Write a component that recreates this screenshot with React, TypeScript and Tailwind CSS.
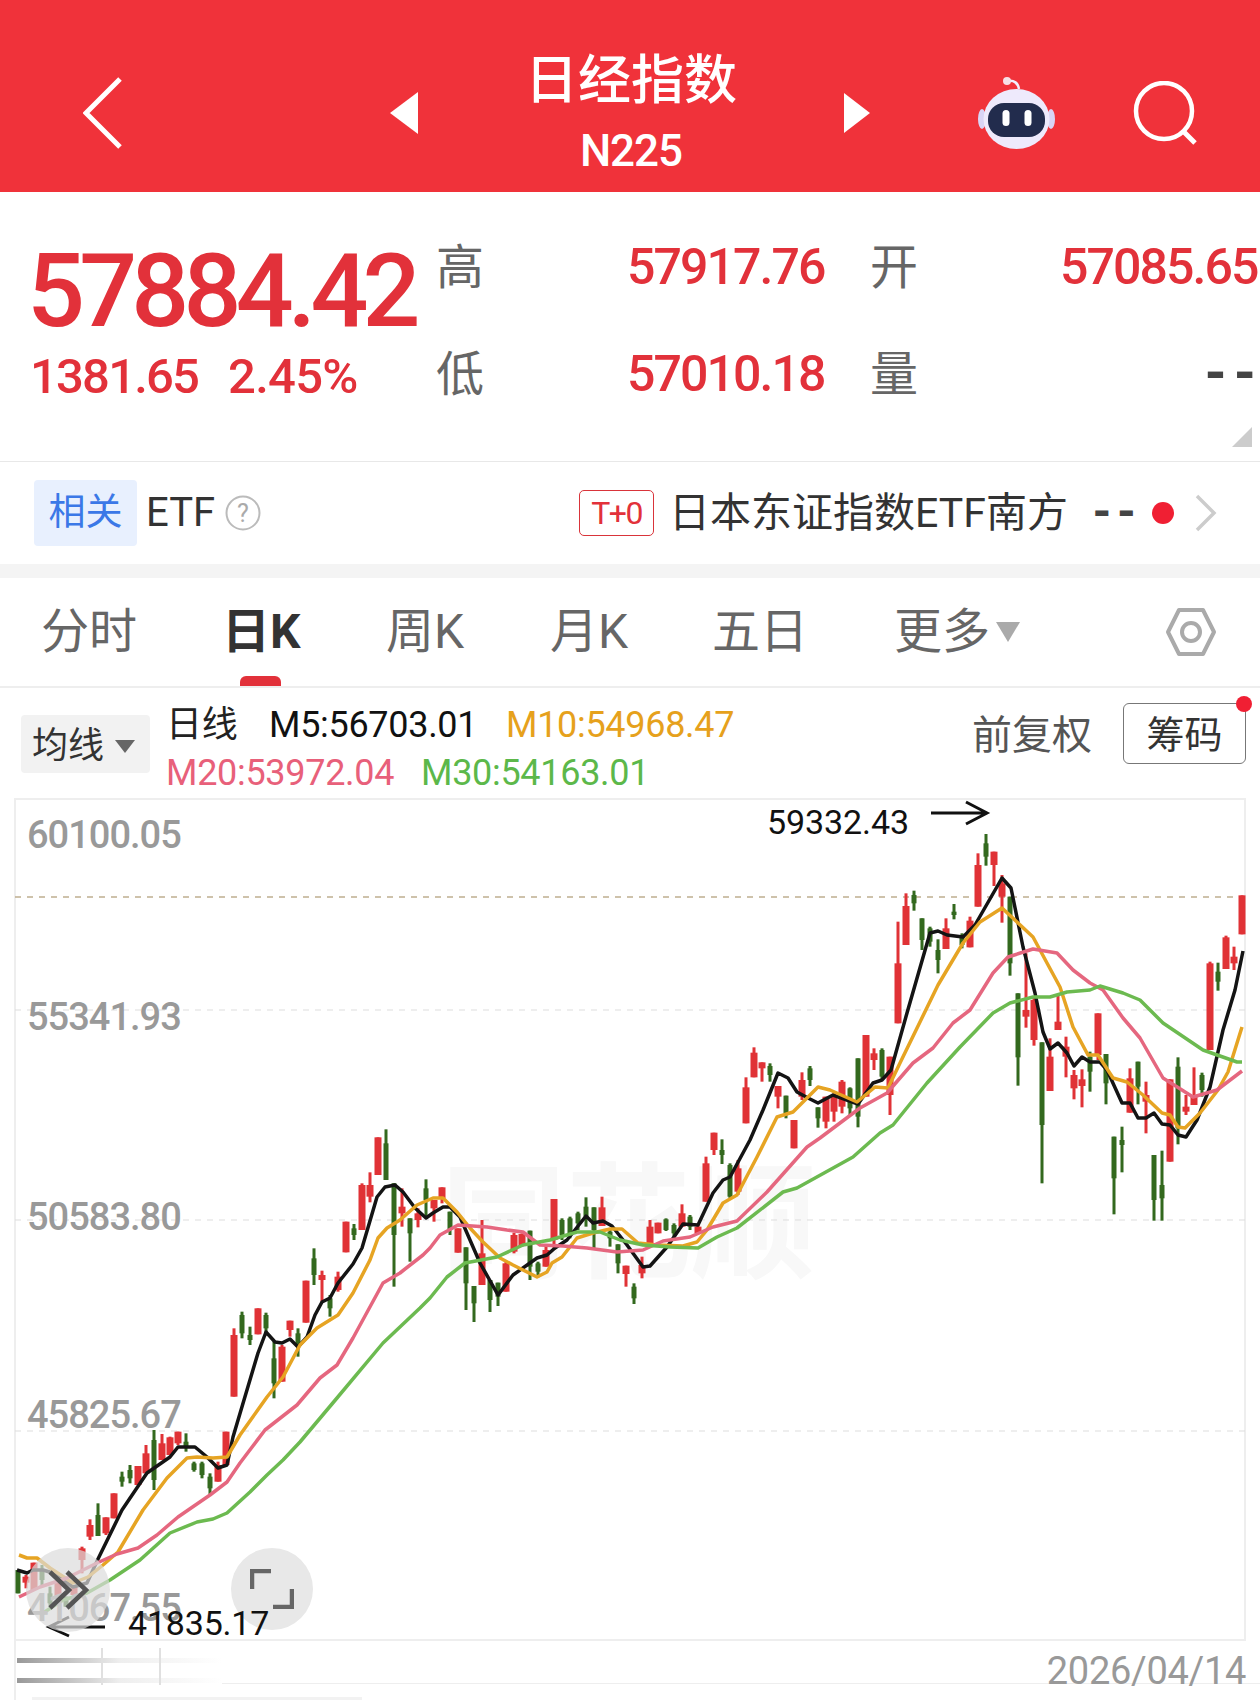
import React from "react";

type Candle = [number, number, number, number, "r" | "g"];

// y values are read off 3x crops, so y = base + v / 3, x steps by 8
const groups: { x: number; base: number; rows: Candle[] }[] = [
  {
    x: 18,
    base: 1400,
    rows: [
      [510, 580, 510, 580, "g"], [525, 565, 530, 548, "r"], [488, 570, 488, 570, "r"], [495, 560, 510, 540, "g"],
      [560, 620, 580, 610, "g"], [545, 600, 545, 590, "r"], [590, 620, 590, 620, "g"], [555, 590, 555, 585, "r"],
      [440, 520, 445, 480, "r"], [358, 420, 375, 410, "r"], [310, 408, 345, 408, "g"], [352, 405, 352, 400, "r"],
      [280, 355, 280, 355, "r"], [215, 260, 230, 245, "g"], [195, 250, 210, 235, "g"], [198, 255, 198, 255, "r"],
      [135, 220, 160, 220, "r"], [90, 270, 120, 240, "g"], [102, 180, 130, 180, "r"], [110, 165, 112, 165, "r"],
      [95, 135, 95, 130, "r"], [100, 155, 125, 140, "g"], [185, 215, 190, 210, "g"], [185, 235, 190, 225, "g"],
      [220, 285, 230, 265, "g"], [185, 245, 195, 245, "r"], [95, 195, 95, 195, "r"],
    ],
  },
  {
    x: 234,
    base: 1000,
    rows: [
      [985, 1190, 1005, 1190, "r"], [935, 1015, 945, 1000, "g"], [980, 1035, 1005, 1020, "g"], [925, 1003, 925, 1003, "r"],
      [938, 1000, 945, 985, "g"], [1025, 1195, 1075, 1150, "g"], [1035, 1145, 1040, 1145, "r"], [962, 1010, 962, 990, "r"],
      [985, 1070, 1000, 1040, "g"], [842, 968, 842, 968, "r"], [745, 855, 775, 825, "g"], [812, 905, 825, 840, "r"],
      [885, 950, 895, 925, "g"], [815, 875, 830, 870, "r"], [665, 757, 665, 757, "r"], [672, 720, 685, 705, "g"],
      [550, 690, 555, 690, "r"], [517, 607, 555, 590, "r"], [412, 525, 412, 525, "r"], [388, 540, 430, 540, "g"],
      [550, 860, 550, 705, "g"], [565, 680, 620, 640, "r"], [655, 785, 655, 700, "g"], [625, 682, 640, 660, "r"],
      [538, 650, 565, 600, "g"],
    ],
  },
  {
    x: 434,
    base: 1000,
    rows: [
      [600, 665, 600, 625, "r"], [562, 610, 562, 595, "r"], [635, 705, 635, 690, "g"], [685, 758, 685, 758, "r"],
      [742, 930, 742, 850, "g"], [858, 966, 858, 910, "g"], [660, 855, 760, 855, "r"], [840, 936, 840, 900, "g"],
      [848, 918, 848, 890, "g"], [785, 875, 790, 875, "r"], [698, 760, 705, 755, "r"], [700, 740, 702, 738, "r"],
      [692, 840, 692, 800, "g"], [785, 832, 790, 815, "g"], [735, 800, 750, 800, "r"], [597, 750, 597, 720, "r"],
      [655, 720, 660, 705, "g"], [650, 715, 655, 700, "g"], [635, 690, 640, 670, "g"], [592, 680, 620, 650, "g"],
      [622, 745, 622, 690, "g"], [590, 678, 622, 678, "r"], [690, 740, 695, 715, "g"], [733, 820, 733, 790, "g"],
      [797, 860, 797, 822, "r"], [850, 912, 860, 895, "g"], [770, 835, 795, 820, "r"], [660, 735, 680, 735, "r"],
      [668, 700, 668, 700, "r"], [655, 693, 658, 690, "g"], [670, 710, 675, 700, "g"], [613, 680, 640, 680, "r"],
      [645, 690, 650, 680, "g"], [670, 700, 680, 700, "r"], [470, 605, 490, 605, "r"], [398, 465, 398, 450, "r"],
      [418, 492, 450, 465, "g"], [490, 595, 495, 590, "g"], [480, 585, 505, 575, "r"], [232, 370, 262, 370, "r"],
      [142, 232, 158, 232, "r"], [187, 245, 187, 205, "r"], [190, 245, 198, 225, "g"], [258, 325, 258, 290, "r"],
      [287, 355, 287, 340, "g"], [360, 445, 360, 445, "r"], [217, 300, 240, 290, "r"], [198, 258, 205, 240, "g"],
      [322, 383, 322, 355, "g"], [290, 385, 290, 365, "r"], [280, 365, 290, 335, "r"], [240, 340, 245, 320, "r"],
      [262, 345, 265, 325, "g"], [175, 382, 175, 350, "g"],
    ],
  },
  {
    x: 866,
    base: 800,
    rows: [
      [705, 890, 705, 890, "r"], [745, 810, 760, 780, "r"], [745, 840, 750, 830, "g"], [770, 945, 770, 885, "r"],
      [365, 670, 490, 670, "r"], [280, 435, 318, 435, "r"], [272, 332, 285, 310, "g"], [355, 450, 355, 420, "g"],
      [380, 440, 385, 425, "g"], [418, 520, 450, 480, "g"], [355, 447, 385, 447, "r"], [312, 358, 335, 345, "g"],
      [400, 445, 405, 435, "g"], [350, 442, 362, 442, "r"], [160, 320, 195, 320, "r"], [102, 197, 130, 170, "g"],
      [155, 258, 155, 195, "r"], [225, 368, 250, 290, "r"], [290, 527, 290, 490, "g"], [580, 857, 580, 772, "g"],
      [460, 683, 630, 650, "r"], [590, 737, 600, 720, "r"], [727, 1150, 727, 975, "g"], [715, 873, 770, 873, "r"],
      [585, 690, 665, 690, "r"], [710, 832, 740, 770, "r"], [810, 898, 825, 865, "r"], [808, 922, 838, 858, "r"],
      [755, 875, 770, 815, "g"], [640, 780, 640, 765, "r"], [762, 913, 762, 850, "g"], [1010, 1243, 1010, 1135, "g"],
      [980, 1117, 1020, 1035, "g"], [805, 938, 835, 938, "r"], [785, 913, 785, 860, "g"], [845, 1000, 885, 905, "r"],
      [1065, 1262, 1065, 1200, "g"], [1052, 1262, 1155, 1195, "g"], [838, 1085, 838, 1085, "r"], [772, 1033, 800, 985, "g"],
      [885, 945, 920, 935, "r"], [802, 915, 885, 915, "r"], [818, 890, 825, 870, "g"], [485, 750, 490, 750, "r"],
      [488, 572, 515, 545, "g"], [407, 507, 412, 507, "r"], [440, 510, 470, 490, "r"], [286, 403, 286, 403, "r"],
    ],
  },
];

const m5 = "17,1570 27,1573 33,1570 43,1570 53,1573 73,1587 87,1583 98,1559 122,1510 147,1473 170,1457 178,1447 195,1447 207,1457 218,1468 227,1465 233,1437 258,1353 266,1332 275,1342 282,1343 290,1339 298,1347 307,1337 315,1315 322,1302 330,1298 338,1283 353,1264 362,1248 377,1197 385,1187 395,1185 403,1192 415,1208 426,1218 433,1213 443,1207 450,1207 460,1217 470,1240 480,1263 498,1295 513,1275 537,1258 547,1255 555,1248 567,1240 586,1216 593,1223 603,1221 612,1226 627,1245 643,1267 650,1266 667,1247 683,1224 698,1225 713,1193 723,1180 730,1177 750,1140 763,1110 778,1073 788,1078 797,1092 808,1098 818,1103 833,1095 858,1104 873,1083 882,1080 891,1070 907,1013 930,933 938,931 947,935 963,937 975,925 1002,878 1011,888 1023,947 1035,993 1043,1032 1050,1049 1058,1043 1067,1053 1074,1066 1082,1057 1090,1062 1100,1062 1107,1070 1122,1103 1130,1103 1138,1118 1146,1118 1154,1113 1162,1124 1170,1125 1178,1135 1186,1137 1197,1120 1210,1087 1223,1030 1235,990 1243,951";
const m10 = "19,1555 27,1558 37,1558 50,1568 73,1583 88,1577 103,1565 118,1552 143,1510 167,1478 187,1458 197,1457 213,1458 227,1457 240,1435 267,1397 283,1377 300,1345 317,1328 338,1315 353,1293 370,1260 378,1238 387,1228 400,1220 417,1205 433,1198 443,1198 457,1212 470,1228 483,1242 500,1258 513,1265 537,1277 547,1272 552,1263 562,1257 577,1238 593,1233 610,1229 622,1229 638,1243 657,1245 683,1246 697,1242 707,1230 723,1203 737,1195 757,1157 777,1117 793,1112 818,1087 830,1090 857,1102 875,1087 888,1088 900,1063 938,985 963,943 980,922 1002,908 1017,922 1033,937 1047,963 1060,987 1073,1027 1088,1055 1098,1055 1113,1078 1127,1082 1143,1095 1162,1113 1170,1115 1178,1127 1185,1128 1200,1113 1218,1090 1228,1072 1242,1027";
const m20 = "19,1597 40,1587 67,1578 97,1563 117,1554 138,1548 157,1535 178,1517 210,1495 227,1482 240,1463 265,1430 297,1405 320,1378 337,1365 353,1338 383,1283 400,1273 423,1255 430,1248 440,1235 458,1225 487,1227 507,1230 523,1232 540,1245 563,1246 587,1248 617,1252 643,1250 663,1241 690,1237 713,1227 737,1221 767,1192 807,1147 820,1138 860,1108 887,1093 913,1063 933,1048 953,1023 970,1010 993,973 1008,957 1033,949 1057,953 1073,970 1090,983 1103,990 1123,1018 1140,1038 1163,1078 1193,1097 1217,1090 1242,1071";
const m30 = "40,1615 63,1600 87,1593 110,1580 140,1560 170,1533 197,1522 213,1519 227,1513 250,1492 267,1475 283,1460 300,1442 337,1398 383,1343 420,1308 430,1298 447,1277 465,1263 497,1257 523,1245 550,1240 577,1232 600,1232 620,1240 643,1245 670,1247 698,1248 717,1237 737,1228 783,1192 797,1188 853,1157 880,1133 893,1125 927,1083 960,1047 993,1013 1010,1003 1033,997 1050,997 1067,992 1090,990 1100,986 1123,993 1140,1000 1163,1023 1203,1050 1237,1062 1242,1062";

function KChart() {
  return (
    <svg className="absolute left-[-2px] top-[-2px]" width="1232" height="843" viewBox="14 798 1232 843">
      {[1010, 1220, 1431].map((y) => (
        <line key={y} x1="15" x2="1245" y1={y} y2={y} stroke="#ddd" strokeWidth="1" strokeDasharray="6 6" />
      ))}
      <line x1="15" x2="1245" y1="897" y2="897" stroke="#bfae90" strokeWidth="1.5" strokeDasharray="6 6" />
      {groups.map((g) =>
        g.rows.map((c, i) => {
          const x = g.x + i * 8;
          const color = c[4] === "r" ? "#e03236" : "#33691e";
          const w = c[4] === "r" ? 7 : 5;
          return (
            <g key={x}>
              <rect x={x - 1.5} y={g.base + c[0] / 3} width="3" height={(c[1] - c[0]) / 3} fill={color} />
              <rect x={x - w / 2} y={g.base + c[2] / 3} width={w} height={(c[3] - c[2]) / 3} fill={color} />
            </g>
          );
        })
      )}
      <polyline points={m5} fill="none" stroke="#141414" strokeWidth="3.5" strokeLinejoin="round" />
      <polyline points={m10} fill="none" stroke="#e6a423" strokeWidth="3.5" strokeLinejoin="round" />
      <polyline points={m20} fill="none" stroke="#e5677f" strokeWidth="3.5" strokeLinejoin="round" />
      <polyline points={m30} fill="none" stroke="#6cba50" strokeWidth="3.5" strokeLinejoin="round" />
      <path d="M931 813H986M966 802l21 11-21 11" fill="none" stroke="#111" strokeWidth="3" />
      <path d="M105 1627H50M69 1617l-20 10 20 9" fill="none" stroke="#111" strokeWidth="3" />
    </svg>
  );
}

function Robot() {
  return (
    <svg width="80" height="72" viewBox="0 0 80 72">
      <path d="M30 4c6-1 10 2 11 8" fill="none" stroke="#f3eefc" strokeWidth="2.5" />
      <circle cx="29" cy="4" r="4" fill="#f7dfe6" />
      <ellipse cx="4" cy="42" rx="4" ry="10" fill="#d9d4f5" />
      <ellipse cx="73" cy="42" rx="4" ry="10" fill="#d9d4f5" />
      <ellipse cx="38.5" cy="42" rx="33" ry="30" fill="#eeeafc" />
      <rect x="10" y="26" width="57" height="34" rx="16" fill="#222c4d" />
      <rect x="24.5" y="33" width="7" height="16" rx="3.5" fill="#fff" />
      <rect x="46.5" y="33" width="7" height="16" rx="3.5" fill="#fff" />
    </svg>
  );
}

export default function App() {
  return (
    <div className="relative h-[1700px] w-[1260px] overflow-hidden bg-white font-['Roboto','Noto_Sans_CJK_SC',sans-serif]">
      <header className="flex h-[192px] items-center bg-[#f0323a] pt-[34px] text-white">
        <svg className="ml-[83px]" width="40" height="72" viewBox="0 0 40 72">
          <path d="M37 2 3 36l34 34" fill="none" stroke="#fff" strokeWidth="5" />
        </svg>
        <svg className="ml-[267px]" width="28" height="42" viewBox="0 0 28 42">
          <path d="M28 0v42L0 21z" fill="#fff" />
        </svg>
        <div className="flex w-[426px] flex-col items-center">
          <div className="mt-[-4px] text-[53px] leading-[66px] font-medium">日经指数</div>
          <div className="mt-[14px] text-[44px] leading-[46px] font-medium tracking-[-1px]">N225</div>
        </div>
        <svg width="26" height="40" viewBox="0 0 26 40">
          <path d="M0 0v40l26-20z" fill="#fff" />
        </svg>
        <div className="ml-[108px]">
          <Robot />
        </div>
        <svg className="ml-[75px]" width="64" height="64" viewBox="0 0 64 64">
          <circle cx="31" cy="30" r="28" fill="none" stroke="#fff" strokeWidth="4.5" />
          <path d="m50 50 12 12" stroke="#fff" strokeWidth="5" />
        </svg>
      </header>

      <section className="relative flex h-[270px] border-b border-[#e8e8e8]">
        <div className="w-[436px] pl-[27px]">
          <div className="mt-[44px] text-[102px] leading-[110px] font-medium tracking-[-5.8px] text-[#e2313a]">57884.42</div>
          <div className="mt-[1px] ml-[3px] flex text-[49px] leading-[60px] font-medium text-[#e2313a]">
            <span className="w-[198px] tracking-[-1.8px]">1381.65</span>
            <span className="tracking-[-0.7px]">2.45%</span>
          </div>
        </div>
        <div className="mt-[22px] grid h-[214px] flex-1 grid-cols-[191px_243px_190px_1fr] grid-rows-2 items-center whitespace-nowrap text-[#e2313a]">
          <span className="text-[48px] text-[#666]">高</span>
          <span className="text-[50px] font-medium tracking-[-1.9px]">57917.76</span>
          <span className="text-[48px] text-[#666]">开</span>
          <span className="text-[50px] font-medium tracking-[-1.9px]">57085.65</span>
          <span className="text-[48px] text-[#666]">低</span>
          <span className="text-[50px] font-medium tracking-[-1.9px]">57010.18</span>
          <span className="text-[48px] text-[#666]">量</span>
          <span className="pr-[2px] text-right font-['Liberation_Mono',monospace] text-[54px] font-bold tracking-[-3px] text-[#444]">--</span>
        </div>
        <svg className="absolute left-[1232px] top-[235px]" width="20" height="20" viewBox="0 0 20 20">
          <path d="M20 0v20H0z" fill="#ccc" />
        </svg>
      </section>

      <section className="flex h-[102px] items-center">
        <div className="ml-[34px] flex h-[66px] w-[103px] items-center justify-center rounded-[4px] bg-[#e8f0fe] text-[37px] text-[#3b78e7]">相关</div>
        <span className="ml-[9px] text-[40px] text-[#333]">ETF</span>
        <svg className="ml-[10px]" width="36" height="36" viewBox="0 0 36 36">
          <circle cx="18" cy="18" r="16.5" fill="none" stroke="#bbb" strokeWidth="2" />
          <text x="18" y="27" textAnchor="middle" fontSize="25" fill="#aaa">?</text>
        </svg>
        <div className="ml-[318px] flex h-[46px] w-[75px] items-center justify-center rounded-[5px] border border-[#d9343a] text-[32px] tracking-[-1.5px] text-[#e2313a]">T+0</div>
        <span className="ml-[15px] pt-[2px] text-[41px] whitespace-nowrap text-[#333]">日本东证指数ETF南方</span>
        <span className="ml-[20px] font-['Liberation_Mono',monospace] text-[46px] font-bold tracking-[-3px] text-[#444]">--</span>
        <span className="ml-[15px] h-[22px] w-[22px] rounded-full bg-[#f01f33]" />
        <svg className="ml-[21px]" width="22" height="38" viewBox="0 0 22 38">
          <path d="m2 2 17 17L2 36" fill="none" stroke="#ccc" strokeWidth="3.5" />
        </svg>
      </section>
      <div className="h-[14px] bg-[#f4f4f4]" />

      <nav className="relative flex h-[110px] items-center border-b-2 border-[#eee] text-[48px] whitespace-nowrap text-[#666]">
        <span className="ml-[41px] w-[181px]">分时</span>
        <span className="w-[164px] font-bold text-[#333]">日K</span>
        <span className="w-[164px]">周K</span>
        <span className="w-[162px]">月K</span>
        <span className="w-[182px]">五日</span>
        <span>更多</span>
        <svg className="ml-[6px]" width="24" height="20" viewBox="0 0 24 20">
          <path d="M0 0h24L12 20z" fill="#aaa" />
        </svg>
        <svg className="ml-[145px]" width="52" height="50" viewBox="0 0 52 50">
          <path d="M14 3h24l11 22-11 22H14L3 25z" fill="none" stroke="#aaa" strokeWidth="4" strokeLinejoin="round" />
          <circle cx="26" cy="25" r="9" fill="none" stroke="#aaa" strokeWidth="4" />
        </svg>
        <div className="absolute bottom-0 left-[240px] h-[10px] w-[41px] rounded-t-[6px] bg-[#e2313a]" />
      </nav>

      <section className="relative flex h-[110px] whitespace-nowrap">
        <div className="mt-[27px] ml-[21px] flex h-[58px] w-[129px] items-center rounded-[4px] bg-[#f2f2f2] pt-[4px] pl-[11px] text-[36px] text-[#333]">
          均线
          <svg className="ml-[11px]" width="20" height="13" viewBox="0 0 20 13">
            <path d="M0 0h20L10 13z" fill="#666" />
          </svg>
        </div>
        <div className="ml-[16px] pt-[13px] text-[36px] leading-[48px] tracking-[-0.3px]">
          <div className="flex">
            <span className="w-[103px] text-[#222]">日线</span>
            <span className="w-[237px] text-[#111]">M5:56703.01</span>
            <span className="text-[#e6a11c]">M10:54968.47</span>
          </div>
          <div className="flex">
            <span className="w-[255px] text-[#e8607a]">M20:53972.04</span>
            <span className="text-[#5cb84a]">M30:54163.01</span>
          </div>
        </div>
        <span className="absolute left-[972px] top-[20px] text-[40px] leading-[56px] text-[#555]">前复权</span>
        <div className="absolute left-[1123px] top-[15px] flex h-[61px] w-[123px] items-center justify-center rounded-[6px] border border-[#777] pt-[3px] text-[38px] text-[#333]">筹码</div>
        <span className="absolute left-[1236px] top-[8px] h-[16px] w-[16px] rounded-full bg-[#f01f33]" />
      </section>

      <div className="relative ml-[14px] h-[843px] w-[1232px] border-2 border-[#eee]">
        <div className="absolute left-[425px] top-[356px] text-[125px] leading-[140px] font-bold whitespace-nowrap text-[#f8f8f8]">同花顺</div>
        <KChart />
        <span className="absolute left-[11px] top-[13px] text-[38px] leading-[44px] font-medium tracking-[-1px] text-[#999]">60100.05</span>
        <span className="absolute left-[11px] top-[195px] text-[38px] leading-[44px] font-medium tracking-[-1px] text-[#999]">55341.93</span>
        <span className="absolute left-[11px] top-[395px] text-[38px] leading-[44px] font-medium tracking-[-1px] text-[#999]">50583.80</span>
        <span className="absolute left-[11px] top-[593px] text-[38px] leading-[44px] font-medium tracking-[-1px] text-[#999]">45825.67</span>
        <span className="absolute left-[11px] top-[786px] text-[38px] leading-[44px] font-medium tracking-[-1px] text-[#999]">41067.55</span>
        <span className="absolute left-[751px] top-[2px] text-[34px] leading-[40px] tracking-[-0.1px] text-[#111]">59332.43</span>
        <div className="absolute left-[10px] top-[748px] flex h-[84px] w-[84px] items-center justify-center rounded-full bg-[#dcdcdc]/70">
          <svg width="44" height="44" viewBox="0 0 44 44">
            <path d="M4 4l19 18L4 40M21 4l19 18-19 18" fill="none" stroke="#555" strokeWidth="4.5" />
          </svg>
        </div>
        <div className="absolute left-[215px] top-[748px] flex h-[82px] w-[82px] items-center justify-center rounded-full bg-[#e8e8e8]">
          <svg width="44" height="40" viewBox="0 0 44 40">
            <path d="M2 20V2h19M42 20v18H23" fill="none" stroke="#666" strokeWidth="4.5" />
          </svg>
        </div>
        <span className="absolute left-[112px] top-[803px] text-[34px] leading-[40px] tracking-[-0.2px] text-[#111]">41835.17</span>
      </div>

      <footer className="relative ml-[14px] h-[59px] border-l-2 border-[#eee]">
        <div className="absolute left-[1px] top-[17px] h-[5px] w-[205px] bg-gradient-to-r from-[#999] via-[#eeeeee] to-transparent" />
        <div className="absolute left-[1px] top-[37px] h-[5px] w-[205px] bg-gradient-to-r from-[#999] via-[#eeeeee] to-transparent" />
        <div className="absolute left-[85px] top-[7px] h-[37px] w-[2px] bg-[#e0e0e0]" />
        <div className="absolute left-[143px] top-[7px] h-[37px] w-[2px] bg-[#e0e0e0]" />
        <div className="absolute left-[206px] right-0 top-[42px] h-[1px] bg-[#eee]" />
        <div className="absolute left-[16px] top-[56px] h-[3px] w-[330px] bg-[#f2f2f2]" />
        <span className="absolute right-[14px] top-[8px] text-[38px] leading-[44px] tracking-[-0.3px] text-[#999]">2026/04/14</span>
      </footer>
    </div>
  );
}
